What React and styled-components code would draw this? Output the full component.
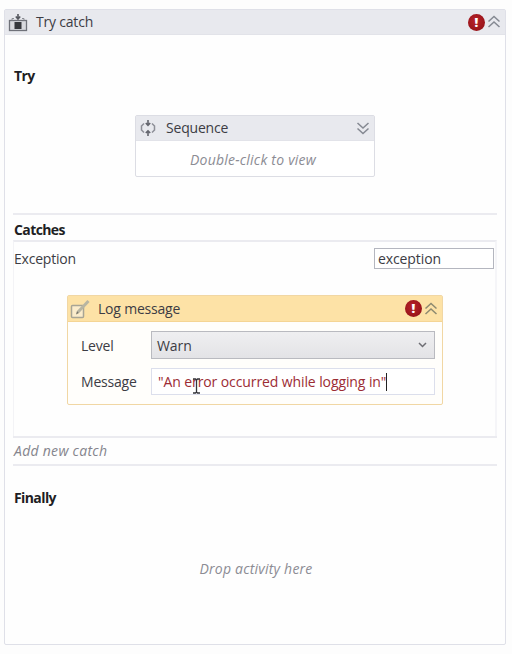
import React from "react";
import styled, { createGlobalStyle } from "styled-components";

const Global = createGlobalStyle`
  html, body { margin: 0; background: #fdfdfd; }
  body { font-family: "Open Sans", "Noto Sans", sans-serif; font-size: 14px; color: #3c3c44; }
  * { box-sizing: border-box; }
`;

const Page = styled.div`
  width: 512px;
  height: 654px;
  padding: 9px 6px 9px 4px;
`;

const Card = styled.div`
  height: 636px;
  border: 1px solid #dfe0e8;
  border-radius: 2px;
  background: #fefefe;
  display: flex;
  flex-direction: column;
`;

const Header = styled.div`
  height: ${(p) => p.$h}px;
  flex: none;
  display: flex;
  align-items: center;
  background: ${(p) => p.$bg || "#e8e9ee"};
  border-bottom: 1px solid ${(p) => p.$line || "#e2e3e9"};
  padding: 0 ${(p) => p.$pr || 4}px 0 ${(p) => p.$pl || 4}px;
`;

const Title = styled.span`
  margin-left: ${(p) => p.$ml}px;
  flex: 1;
  letter-spacing: -0.2px;
  line-height: 20px;
`;

const Body = styled.div`
  flex: 1;
  padding: 0 8px 0 8px;
  display: flex;
  flex-direction: column;
`;

const SectionLabel = styled.div`
  font-weight: 700;
  font-size: 14px;
  letter-spacing: -0.6px;
  color: #1e1e24;
  line-height: 20px;
  padding-left: 1px;
  margin-top: ${(p) => p.$mt}px;
`;

const TrySlot = styled.div`
  height: 127px;
  padding: 29px 1px 0;
  display: flex;
  justify-content: center;
`;

const SequenceCard = styled.div`
  width: 240px;
  height: 62px;
  border: 1px solid #dcdde4;
  border-radius: 2px;
  background: #fff;
`;

const Hint = styled.div`
  font-style: italic;
  color: #8c8c94;
  text-align: center;
  font-size: 14px;
  letter-spacing: 0.22px;
  line-height: 20px;
  padding-top: ${(p) => p.$pt}px;
  padding-left: ${(p) => p.$pl || 0}px;
  padding-right: ${(p) => p.$pr || 0}px;
`;

const Divider = styled.div`
  height: 2px;
  flex: none;
  background: #ebebf0;
`;

const CatchBox = styled.div`
  height: 196px;
  border-top: 2px solid #ebebf0;
  border-left: 1px solid #f3f3f6;
  border-right: 2px solid #f5f5f8;
  padding-right: 1px;
`;

const ExceptionRow = styled.div`
  height: 53px;
  display: flex;
  justify-content: space-between;
  align-items: flex-start;
  padding-top: 6px;
`;

const RowText = styled.span`
  line-height: 24px;
  margin-top: ${(p) => p.$mt || 0}px;
  letter-spacing: -0.2px;
`;

const ExceptionInput = styled.div`
  width: 120px;
  height: 21px;
  border: 1px solid #b4b6bf;
  background: #fff;
  padding-left: 3px;
  line-height: 19px;
  letter-spacing: -0.1px;
`;

const LogCard = styled.div`
  position: relative;
  width: 376px;
  height: 110px;
  margin-left: 53px;
  border: 1px solid #f1d7a4;
  border-radius: 2px;
  background: #fffefb;
`;

const FormGrid = styled.div`
  display: grid;
  grid-template-columns: 70px 284px;
  row-gap: 9px;
  padding: 9px 0 0 13px;
  align-items: center;
`;

const SelectBox = styled.div`
  height: 28px;
  border: 1px solid #b9bac0;
  background: linear-gradient(#efeff1, #e3e3e6);
  display: flex;
  align-items: center;
  justify-content: space-between;
  padding: 0 7px 0 5px;
  letter-spacing: -0.1px;
`;

const MessageInput = styled.div`
  height: 27px;
  border: 1px solid #dcdfec;
  background: #fff;
  padding-left: 6px;
  line-height: 25px;
  color: #9c2c34;
  letter-spacing: -0.1px;
  white-space: nowrap;
`;

const Caret = styled.span`
  display: inline-block;
  width: 1px;
  height: 18px;
  background: #222;
  vertical-align: -4px;
`;

const TextCursor = styled.svg`
  position: absolute;
  left: 124px;
  top: 82px;
`;

const AddCatch = styled.div`
  height: 26px;
  padding-left: 1px;
  font-style: italic;
  color: #85858d;
  line-height: 26px;
  letter-spacing: 0.28px;
`;

const ErrorDot = styled.span`
  width: 17px;
  height: 17px;
  flex: none;
  margin-right: 2px;
  border-radius: 50%;
  background: radial-gradient(circle at 45% 40%, #b8222a, #8c0f14);
  color: #fff;
  font-weight: 800;
  font-size: 13px;
  line-height: 17px;
  text-align: center;
`;

const Chevrons = ({ up = true, color = "#858992" }) => (
  <svg width="14" height="14" viewBox="0 0 14 14" fill="none" stroke={color} strokeWidth="1.5">
    <path d={up ? "M1.5 6.5 7 1.5l5.5 5M1.5 12 7 7l5.5 5" : "M1.5 2 7 7l5.5-5M1.5 7.5 7 12.5l5.5-5"} />
  </svg>
);

const TryCatchIcon = () => (
  <svg width="20" height="19" viewBox="0 0 20 19" fill="none">
    <path d="M10 1v5M7.8 3.5 10 6l2.2-2.5" stroke="#55575e" strokeWidth="1.6" />
    <rect x="1.5" y="7.5" width="17" height="10" fill="#d8d9de" stroke="#6f7179" strokeWidth="1.3" />
    <rect x="6.5" y="9" width="7" height="7" fill="#35373c" />
    <path d="M4 7.5V5.5h2M16 7.5V5.5h-2" stroke="#8a8c93" />
  </svg>
);

const SequenceIcon = () => (
  <svg width="18" height="18" viewBox="0 0 18 18" fill="none" stroke="#63656d">
    <path d="M2.5 7 5 4.5M15.5 7 13 4.5M2.5 11 5 13.5M15.5 11 13 13.5M2.5 6.5v5M15.5 6.5v5" strokeWidth="1.5" stroke="#8d8f97" />
    <path d="M9 1v5M6.8 4 9 6.3 11.2 4M9 12v5M6.8 14 9 11.8 11.2 14" strokeWidth="1.6" />
  </svg>
);

const LogIcon = () => (
  <svg width="21" height="20" viewBox="0 0 21 20" fill="none">
    <rect x="1.5" y="6.5" width="12" height="12" rx="1" fill="#fbeccb" stroke="#a8a595" strokeWidth="1.5" />
    <path d="M8 13 18.5 2" stroke="#b8b5a2" strokeWidth="3" />
    <path d="M6 15.5 7 12l2 2z" fill="#77756a" />
  </svg>
);

const SmallArrow = () => (
  <svg width="9" height="6" viewBox="0 0 9 6" fill="none" stroke="#6e6e74" strokeWidth="1.5">
    <path d="M1 1l3.5 3.5L8 1" />
  </svg>
);

export default function App() {
  return (
    <Page>
      <Global />
      <Card>
        <Header $h={25} $pl={3} $pr={4}>
          <TryCatchIcon />
          <Title $ml={8}>Try catch</Title>
          <ErrorDot>!</ErrorDot>
          <Chevrons />
        </Header>
        <Body>
          <SectionLabel $mt={31}>Try</SectionLabel>
          <TrySlot>
            <SequenceCard>
              <Header $h={25} $pl={3} $pr={4}>
                <SequenceIcon />
                <Title $ml={9}>Sequence</Title>
                <Chevrons up={false} />
              </Header>
              <Hint $pt={9} $pr={4}>Double-click to view</Hint>
            </SequenceCard>
          </TrySlot>
          <Divider />
          <SectionLabel $mt={5}>Catches</SectionLabel>
          <CatchBox>
            <ExceptionRow>
              <RowText $mt={-1}>Exception</RowText>
              <ExceptionInput>exception</ExceptionInput>
            </ExceptionRow>
            <LogCard>
              <Header $h={26} $bg="#fde2a6" $line="#f5d594" $pl={2} $pr={4}>
                <LogIcon />
                <Title $ml={7}>Log message</Title>
                <ErrorDot>!</ErrorDot>
                <Chevrons color="#8d8a70" />
              </Header>
              <FormGrid>
                <RowText $mt={2}>Level</RowText>
                <SelectBox>
                  Warn
                  <SmallArrow />
                </SelectBox>
                <RowText>Message</RowText>
                <MessageInput>
                  "An error occurred while logging in"
                  <Caret />
                </MessageInput>
              </FormGrid>
              <TextCursor width="9" height="16" viewBox="0 0 9 16" fill="none" stroke="#33343a" strokeWidth="1.3">
                <path d="M1 1h2.5l1 1 1-1H8M4.5 2v12M1 15h2.5l1-1 1 1H8" />
              </TextCursor>
            </LogCard>
          </CatchBox>
          <Divider />
          <AddCatch>Add new catch</AddCatch>
          <Divider />
          <SectionLabel $mt={22}>Finally</SectionLabel>
          <Hint $pt={51} $pl={2}>Drop activity here</Hint>
        </Body>
      </Card>
    </Page>
  );
}
